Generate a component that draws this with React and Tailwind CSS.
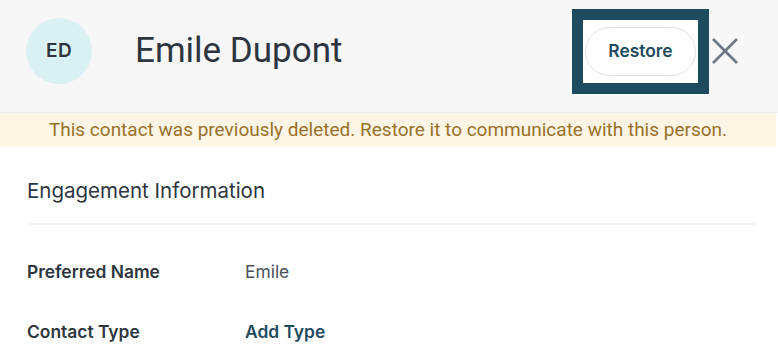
const Field = ({ label, children }) => (
  <div className="flex items-center h-[60px]">
    <div className="w-[218px] text-[17.4px] font-semibold text-[#2d3640]">{label}</div>
    <div className="text-[17.4px]">{children}</div>
  </div>
);

export default function App() {
  return (
    <div className="w-[778px] h-[360px] bg-white font-['Inter',sans-serif] overflow-hidden">
      <header className="flex items-center h-[113px] pb-[10px] bg-[#f7f7f7] pl-[26px] pr-[40px] border-b border-[#eeeeee]">
        <div className="flex items-center justify-center w-[66px] h-[66px] rounded-full bg-[#daf1f4] text-[19px] tracking-[0.5px] font-semibold text-[#2d3640]">
          ED
        </div>
        <h1 className="ml-[43px] font-['Roboto',sans-serif] text-[35px] text-[#2d3640]">Emile Dupont</h1>
        <div className="ml-auto flex items-center">
          <div className="p-[11px] bg-[#1f4b5f]">
            <div className="flex items-center px-[2px] py-[7px] bg-white">
              <button className="h-[49px] w-[111px] rounded-full border border-[#dde1e6] bg-white text-[17.4px] font-semibold text-[#1f4b5f]">
                Restore
              </button>
            </div>
          </div>
          <svg className="ml-[3px]" width="26" height="26" viewBox="0 0 26 26" fill="none" stroke="#6b7785" strokeWidth="2.6">
            <path d="M1 1L25 25M25 1L1 25" />
          </svg>
        </div>
      </header>
      <div className="h-[34px] mr-[2px] flex items-center justify-center bg-[#fdf5e6] font-['Roboto',sans-serif] text-[19px] text-[#9a7128]">
        This contact was previously deleted. Restore it to communicate with this person.
      </div>
      <section className="pl-[27px] pr-[23px]">
        <h2 className="pt-[31px] pb-[19px] leading-[26px] border-b-2 border-[#f2f2f2] text-[20.5px] text-[#2d3640]">
          Engagement Information
        </h2>
        <div className="pt-[17px]">
          <Field label="Preferred Name">
            <span className="text-[#4a525c]">Emile</span>
          </Field>
          <Field label="Contact Type">
            <span className="font-semibold text-[#1f4b5f]">Add Type</span>
          </Field>
        </div>
      </section>
    </div>
  );
}
